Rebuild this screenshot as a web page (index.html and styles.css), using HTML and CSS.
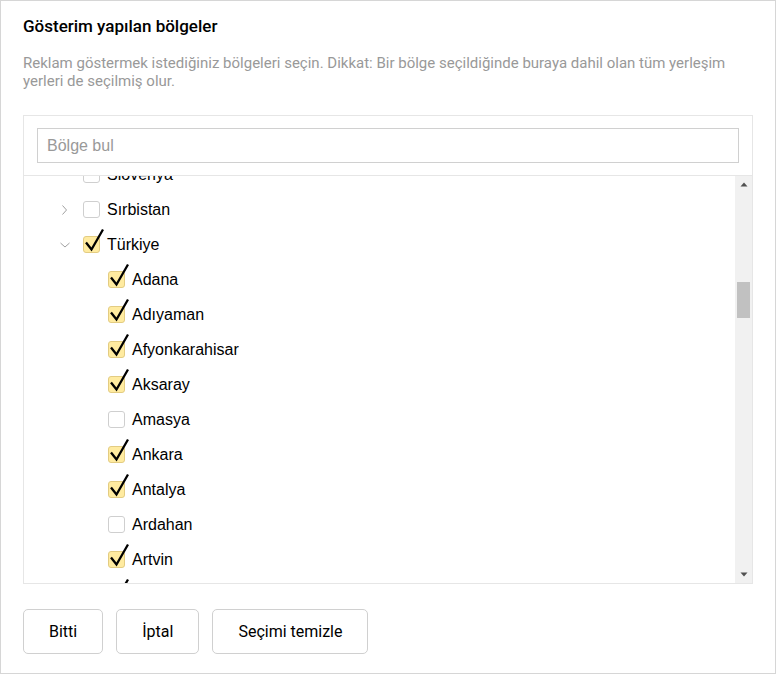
FILE: index.html
```html
<!DOCTYPE html>
<html lang="tr">
<head>
<meta charset="utf-8">
<title>Gösterim yapılan bölgeler</title>
<link rel="stylesheet" href="styles.css">
</head>
<body>
<div class="panel">
  <h1 class="title">Gösterim yapılan bölgeler</h1>
  <p class="desc">Reklam göstermek istediğiniz bölgeleri seçin. Dikkat: Bir bölge seçildiğinde buraya dahil olan tüm yerleşim yerleri de seçilmiş olur.</p>

  <div class="tree">
    <div class="search-area">
      <input class="search" type="text" placeholder="Bölge bul">
    </div>
    <div class="list-wrap">
      <div class="viewport">
        <ul class="list" style="margin-top:-19px">
          <li class="row lvl0"><span class="toggle"></span><span class="cb"></span><span class="label">Slovenya</span></li>
          <li class="row lvl0"><span class="toggle"><svg width="12" height="12" viewBox="0 0 12 12"><path d="M3.5 1.5 L7.5 6 L3.5 10.5" fill="none" stroke="#a0a0a0" stroke-width="1"/></svg></span><span class="cb"></span><span class="label">Sırbistan</span></li>
          <li class="row lvl0"><span class="toggle"><svg width="12" height="12" viewBox="0 0 12 12"><path d="M1.5 4 L6 8 L10.5 4" fill="none" stroke="#a0a0a0" stroke-width="1"/></svg></span><span class="cb on"><svg class="tick" width="24" height="24" viewBox="0 0 24 24"><path d="M3 14.5 L8.5 21.5 L20 1.5" fill="none" stroke="#000" stroke-width="2.3"/></svg></span><span class="label">Türkiye</span></li>
          <li class="row lvl1"><span class="toggle"></span><span class="cb on"><svg class="tick" width="24" height="24" viewBox="0 0 24 24"><path d="M3 14.5 L8.5 21.5 L20 1.5" fill="none" stroke="#000" stroke-width="2.3"/></svg></span><span class="label">Adana</span></li>
          <li class="row lvl1"><span class="toggle"></span><span class="cb on"><svg class="tick" width="24" height="24" viewBox="0 0 24 24"><path d="M3 14.5 L8.5 21.5 L20 1.5" fill="none" stroke="#000" stroke-width="2.3"/></svg></span><span class="label">Adıyaman</span></li>
          <li class="row lvl1"><span class="toggle"></span><span class="cb on"><svg class="tick" width="24" height="24" viewBox="0 0 24 24"><path d="M3 14.5 L8.5 21.5 L20 1.5" fill="none" stroke="#000" stroke-width="2.3"/></svg></span><span class="label">Afyonkarahisar</span></li>
          <li class="row lvl1"><span class="toggle"></span><span class="cb on"><svg class="tick" width="24" height="24" viewBox="0 0 24 24"><path d="M3 14.5 L8.5 21.5 L20 1.5" fill="none" stroke="#000" stroke-width="2.3"/></svg></span><span class="label">Aksaray</span></li>
          <li class="row lvl1"><span class="toggle"></span><span class="cb"></span><span class="label">Amasya</span></li>
          <li class="row lvl1"><span class="toggle"></span><span class="cb on"><svg class="tick" width="24" height="24" viewBox="0 0 24 24"><path d="M3 14.5 L8.5 21.5 L20 1.5" fill="none" stroke="#000" stroke-width="2.3"/></svg></span><span class="label">Ankara</span></li>
          <li class="row lvl1"><span class="toggle"></span><span class="cb on"><svg class="tick" width="24" height="24" viewBox="0 0 24 24"><path d="M3 14.5 L8.5 21.5 L20 1.5" fill="none" stroke="#000" stroke-width="2.3"/></svg></span><span class="label">Antalya</span></li>
          <li class="row lvl1"><span class="toggle"></span><span class="cb"></span><span class="label">Ardahan</span></li>
          <li class="row lvl1"><span class="toggle"></span><span class="cb on"><svg class="tick" width="24" height="24" viewBox="0 0 24 24"><path d="M3 14.5 L8.5 21.5 L20 1.5" fill="none" stroke="#000" stroke-width="2.3"/></svg></span><span class="label">Artvin</span></li>
          <li class="row lvl1"><span class="toggle"></span><span class="cb on"><svg class="tick" width="24" height="24" viewBox="0 0 24 24"><path d="M3 14.5 L8.5 21.5 L20 1.5" fill="none" stroke="#000" stroke-width="2.3"/></svg></span><span class="label">Aydın</span></li>
        </ul>
      </div>
      <div class="scrollbar">
        <div class="sb-btn"><svg width="8" height="5" viewBox="0 0 8 5"><path d="M0.5 4.5 L4 0.5 L7.5 4.5 Z" fill="#505050"/></svg></div>
        <div class="sb-track"><div class="sb-thumb" style="margin-top:89px"></div></div>
        <div class="sb-btn"><svg width="8" height="5" viewBox="0 0 8 5"><path d="M0.5 0.5 L4 4.5 L7.5 0.5 Z" fill="#505050"/></svg></div>
      </div>
    </div>
  </div>

  <div class="actions">
    <button class="btn" type="button">Bitti</button>
    <button class="btn" type="button">İptal</button>
    <button class="btn" type="button">Seçimi temizle</button>
  </div>
</div>
</body>
</html>
```

FILE: styles.css
```css
* { box-sizing: border-box; }

html, body {
  margin: 0;
  padding: 0;
  background: #fff;
}

body {
  font-family: Roboto, "Noto Sans", "Liberation Sans", sans-serif;
  color: #000;
}

.panel {
  width: 776px;
  height: 674px;
  border: 1px solid #d6d6d6;
  padding: 14px 22px 0 22px;
  display: flex;
  flex-direction: column;
}

.title {
  margin: 0;
  font-size: 17px;
  line-height: 22px;
  font-weight: 500;
  color: #000;
}

.desc {
  margin: 17px 0 0 0;
  font-size: 15px;
  line-height: 18px;
  color: #999;
}

.tree {
  margin-top: 25px;
  height: 469px;
  border: 1px solid #e6e6e6;
  display: flex;
  flex-direction: column;
}

.search-area {
  padding: 12px 13px 12px 13px;
  border-bottom: 1px solid #e6e6e6;
}

.search {
  display: block;
  width: 100%;
  height: 35px;
  border: 1px solid #d0d0d0;
  border-radius: 0;
  padding: 0 9px;
  font-family: "Liberation Sans", Arial, sans-serif;
  font-size: 16px;
  color: #000;
  outline: none;
  background: #fff;
}

.search::placeholder {
  color: #999;
}

.list-wrap {
  flex: 1;
  display: flex;
  min-height: 0;
}

.viewport {
  flex: 1;
  overflow: hidden;
}

.list {
  list-style: none;
  margin: 0;
  padding: 0;
}

.row {
  height: 35px;
  display: flex;
  align-items: center;
  font-family: "Liberation Sans", Arial, sans-serif;
  font-size: 16px;
  color: #000;
}

.lvl0 { padding-left: 35px; }
.lvl1 { padding-left: 60px; }

.toggle {
  width: 24px;
  flex: none;
  display: flex;
  align-items: center;
}

.toggle svg { display: block; }

.cb {
  position: relative;
  flex: none;
  width: 17px;
  height: 17px;
  border: 1px solid #cfcfcf;
  border-radius: 3px;
  background: #fff;
}

.cb.on {
  background: #ffeba0;
  border-color: #e3cc82;
}

.tick {
  position: absolute;
  left: -1px;
  top: -9px;
  overflow: visible;
}

.label {
  margin-left: 7px;
  white-space: nowrap;
}

.scrollbar {
  width: 17px;
  flex: none;
  background: #f1f1f1;
  display: flex;
  flex-direction: column;
}

.sb-btn {
  height: 17px;
  flex: none;
  display: flex;
  align-items: center;
  justify-content: center;
}

.sb-btn svg { display: block; }

.sb-track {
  flex: 1;
  padding: 0 2px;
}

.sb-thumb {
  height: 36px;
  background: #c1c1c1;
}

.actions {
  margin-top: 25px;
  display: flex;
  gap: 13px;
}

.btn {
  height: 45px;
  padding: 0 25px;
  border: 1px solid #d0d0d0;
  border-radius: 5px;
  background: #fff;
  font-family: Roboto, "Noto Sans", "Liberation Sans", sans-serif;
  font-size: 16px;
  color: #000;
  cursor: pointer;
}
```
